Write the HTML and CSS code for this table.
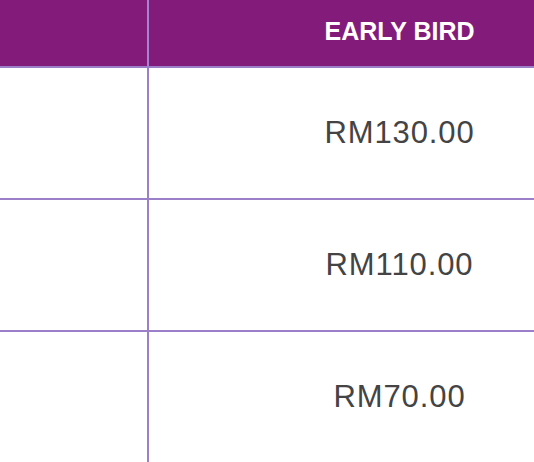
FILE: index.html
```html
<!DOCTYPE html>
<html>
<head>
<meta charset="utf-8">
<link rel="stylesheet" href="styles.css">
</head>
<body>
<div class="price-table">
  <div class="row head">
    <div class="cell label"></div>
    <div class="cell value">EARLY BIRD</div>
  </div>
  <div class="row">
    <div class="cell label"></div>
    <div class="cell value price">RM130.00</div>
  </div>
  <div class="row">
    <div class="cell label"></div>
    <div class="cell value price">RM110.00</div>
  </div>
  <div class="row">
    <div class="cell label"></div>
    <div class="cell value price">RM70.00</div>
  </div>
</div>
</body>
</html>
```
FILE: styles.css
```css
html, body {
  margin: 0;
  padding: 0;
  overflow: hidden;
  background: #ffffff;
}
.price-table {
  width: 534px;
  font-family: "Liberation Sans", Arial, sans-serif;
}
.row {
  display: grid;
  grid-template-columns: 149px 1fr;
  height: 132px;
  box-sizing: border-box;
  border-bottom: 2px solid #9b7fc8;
}
.row.head {
  height: 68px;
  background: #831b7b;
}
.cell {
  display: flex;
  align-items: center;
  justify-content: center;
}
.value {
  padding-left: 116px;
}
.label {
  border-right: 2px solid #9b7fc8;
}
.head .label {
  border-right-color: #a585cf;
}
.head .value {
  color: #ffffff;
  font-weight: bold;
  font-size: 25px;
  padding-bottom: 4px;
}
.price {
  color: #444444;
  font-size: 31px;
  letter-spacing: 0.9px;
}
```
